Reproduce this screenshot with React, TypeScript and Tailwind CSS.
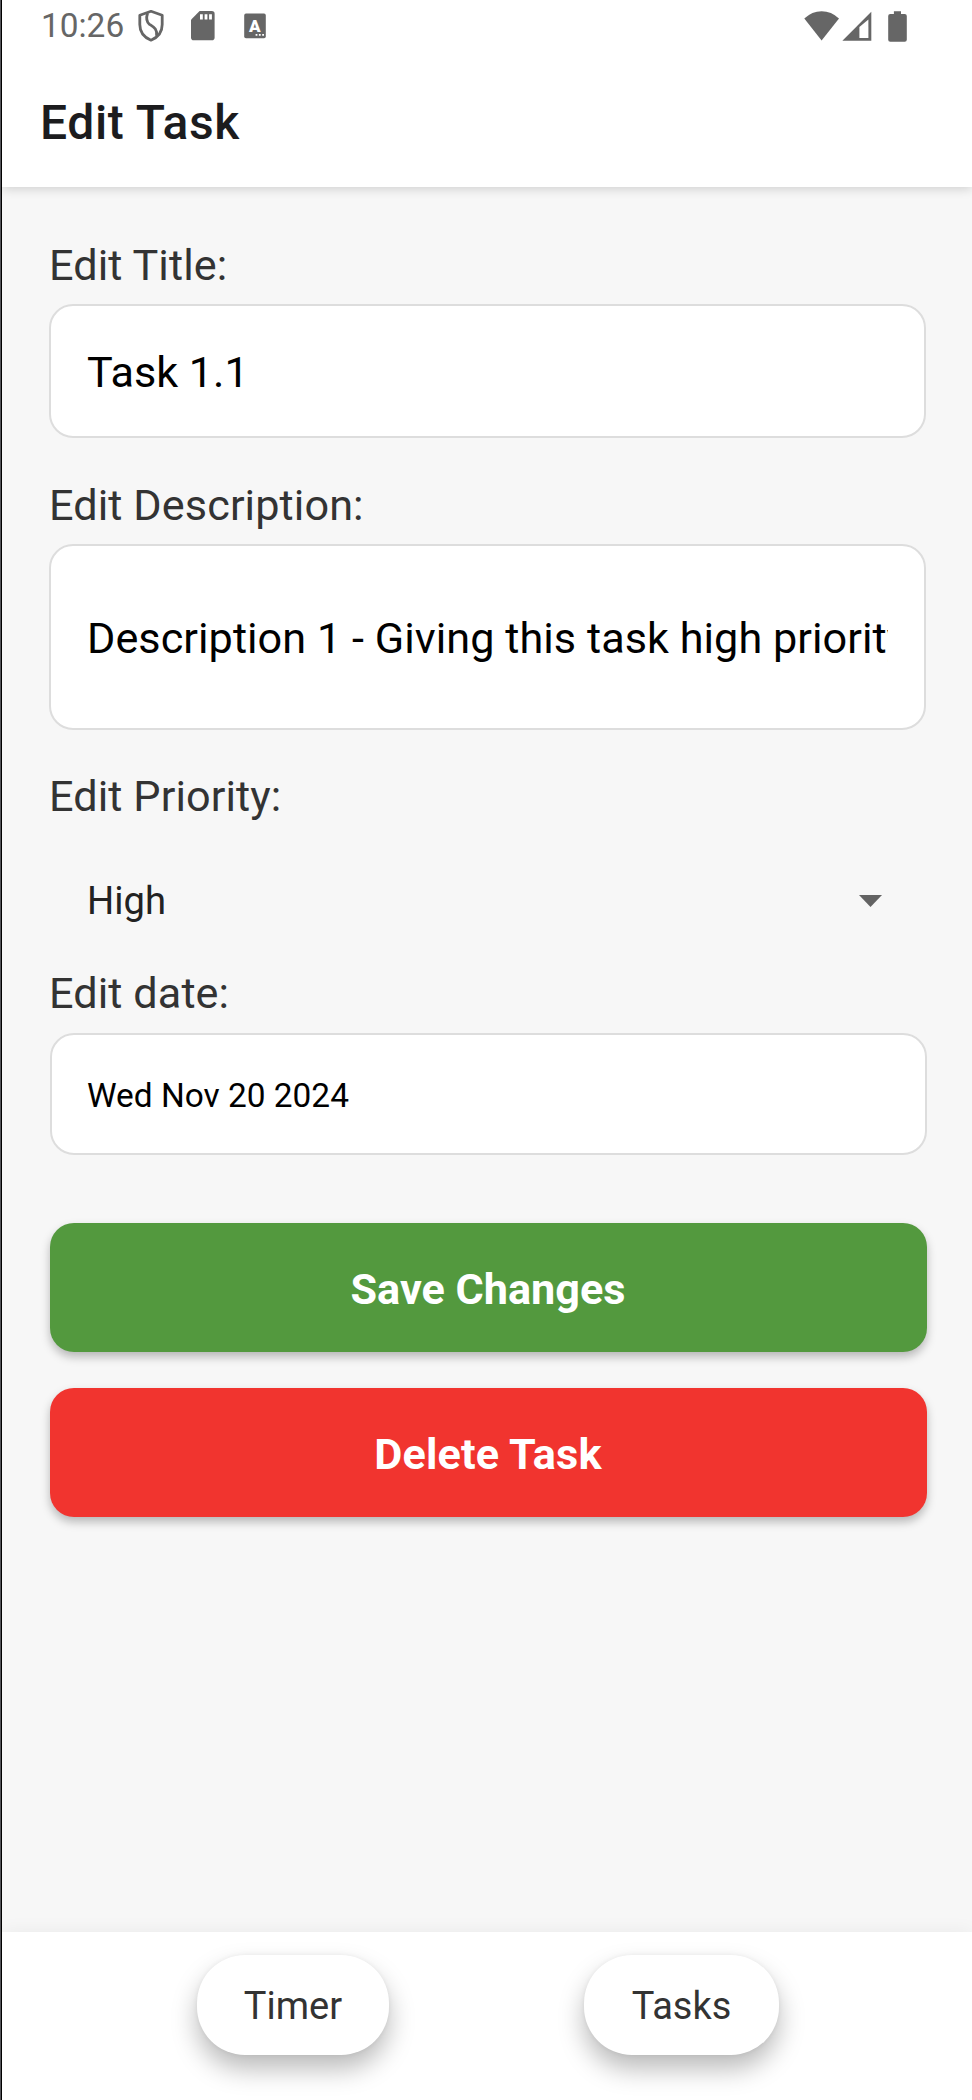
import type { ReactNode } from "react";

function ShieldIcon() {
  return (
    <svg width="28" height="34" viewBox="0 0 28 34" className="ml-[13px] shrink-0" fill="none" stroke="#666" strokeLinejoin="round">
      <path d="M14 2.3 L25.2 6.2 V15.5 C25.2 23 21 28.4 14 31.2 C7 28.4 2.8 23 2.8 15.5 V6.2 Z" strokeWidth="2.8" />
      <path d="M10.6 4 C9 9 9 12.5 12.5 15.3 C17 18.3 20.5 20 19.6 27" strokeWidth="2.8" />
    </svg>
  );
}

function SdCardIcon() {
  return (
    <svg width="24" height="30" viewBox="0 0 24 30" className="ml-[26px] shrink-0">
      <path d="M8.6 0 H20.8 Q23.6 0 23.6 2.8 V26.4 Q23.6 29.2 20.8 29.2 H2.8 Q0 29.2 0 26.4 V8.8 Z" fill="#666" />
      <path d="M9 3.2h2.8v5.4H9z M13.6 3.2h2.8v5.4h-2.8z M18.1 3.2h2.8v5.4h-2.8z" fill="#fff" />
    </svg>
  );
}

function KeyboardIcon() {
  return (
    <svg width="22" height="26" viewBox="0 0 22 26" className="ml-[29px] shrink-0">
      <rect x="0.2" y="0.6" width="21.6" height="24.6" rx="1.8" fill="#666" />
      <text x="10.8" y="18.6" textAnchor="middle" fontFamily="Roboto, sans-serif" fontWeight="900" fontSize="17" fill="#fff">A</text>
      <path d="M11.6 21h1.8v1.8h-1.8z M14.9 21h1.8v1.8h-1.8z M18.2 21H20v1.8h-1.8z" fill="#fff" />
    </svg>
  );
}

function StatusBar() {
  return (
    <div className="flex h-[52px] items-center pl-[39px] pr-[65px] text-[#666]">
      <span className="w-[83px] text-[33.4px] leading-[52px]">10:26</span>
      <ShieldIcon />
      <SdCardIcon />
      <KeyboardIcon />
      <svg width="36" height="30" viewBox="0 0 36 30" className="ml-auto shrink-0" fill="#666">
        <path d="M0.3 7.6 Q8 0.3 17.6 0.3 Q27.4 0.3 35 7.6 L17.6 29.6 Z" />
      </svg>
      <svg width="30" height="30" viewBox="0 0 30 30" className="ml-[2px] shrink-0">
        <path d="M29.3 0.8 V29.8 H0.4 Z" fill="#666" />
        <path d="M26.4 8.6 V27 H17.4 V16 Z" fill="#fff" />
      </svg>
      <svg width="19" height="31" viewBox="0 0 19 31" className="ml-[16px] shrink-0" fill="#666">
        <path d="M5.9 0.2 H13 V3 H16.7 Q18.8 3 18.8 5.1 V28.7 Q18.8 30.8 16.7 30.8 H2.3 Q0.2 30.8 0.2 28.7 V5.1 Q0.2 3 2.3 3 H5.9 Z" />
      </svg>
    </div>
  );
}

function Label({ children }: { children: ReactNode }) {
  return <div className="h-[50px] text-[43.2px] leading-[52px] tracking-[0.1px] text-[#333]">{children}</div>;
}

export default function App() {
  return (
    <div className="flex h-[2100px] w-[972px] bg-[#f7f7f7] font-['Roboto',sans-serif]">
      <div className="w-px shrink-0 bg-[#55555a]" />
      <div className="w-px shrink-0 bg-black" />
      <div className="flex min-w-0 flex-1 flex-col overflow-hidden">
        <header className="h-[187px] shrink-0 bg-white shadow-[0_2px_10px_rgba(0,0,0,0.16)]">
          <StatusBar />
          <h1 className="mt-[36px] pl-[38px] text-[48px] font-medium leading-[70px] tracking-[0.6px] text-[#1c1c1e]">Edit Task</h1>
        </header>

        <main className="flex-1 pl-[47px] pr-[45px] pt-[53px]">
          <Label>Edit Title:</Label>
          <div className="mt-[14px] flex h-[134px] w-[877px] items-center rounded-[24px] border-2 border-[#ddd] bg-white px-[36px] pt-[4px] text-[43.2px] text-black">
            Task 1.1
          </div>

          <div className="mt-[42px]">
            <Label>Edit Description:</Label>
          </div>
          <div className="mt-[14px] flex h-[186px] w-[877px] items-center rounded-[24px] border-2 border-[#ddd] bg-white px-[36px] pt-[4px] text-[43.2px] tracking-[0.05px] text-black">
            <div className="w-full overflow-hidden whitespace-nowrap">Description 1 - Giving this task high priority</div>
          </div>

          <div className="mt-[41px]">
            <Label>Edit Priority:</Label>
          </div>
          <div className="mt-[25px] flex h-[110px] items-center justify-between pl-[38px] pr-[45px] text-[38.2px] text-[#222]">
            <span className="pt-[2px]">High</span>
            <svg width="23" height="12" viewBox="0 0 23 12" fill="#636363">
              <path d="M0 0 H23 L11.5 12 Z" />
            </svg>
          </div>

          <div className="mt-[12px]">
            <Label>Edit date:</Label>
          </div>
          <div className="ml-px mt-[15px] flex h-[122px] w-[877px] items-center rounded-[24px] border-2 border-[#ddd] bg-white px-[35px] pt-[4px] text-[33.4px] text-black">
            Wed Nov 20 2024
          </div>

          <button className="ml-px mt-[68px] block h-[129px] w-[877px] rounded-[24px] bg-[#53993e] pr-px pt-[5px] text-[43.2px] font-bold text-white shadow-[0_5px_10px_rgba(0,0,0,0.26)]">
            Save Changes
          </button>
          <button className="ml-px mt-[36px] block h-[129px] w-[877px] rounded-[24px] bg-[#f1342f] pr-px pt-[5px] text-[43.2px] font-bold tracking-[0.15px] text-white shadow-[0_5px_10px_rgba(0,0,0,0.26)]">
            Delete Task
          </button>
        </main>

        <footer className="flex h-[168px] shrink-0 bg-white pl-[195px] pt-[23px] text-[38px] text-[#333] shadow-[0_0_18px_rgba(0,0,0,0.06)]">
          <button className="h-[100px] w-[192px] rounded-[48px] bg-white pt-[3px] shadow-[0_14px_26px_rgba(0,0,0,0.27),0_0_5px_rgba(0,0,0,0.06)]">Timer</button>
          <button className="ml-[195px] h-[100px] w-[195px] rounded-[48px] bg-white pt-[3px] shadow-[0_14px_26px_rgba(0,0,0,0.27),0_0_5px_rgba(0,0,0,0.06)]">Tasks</button>
        </footer>
      </div>
    </div>
  );
}
